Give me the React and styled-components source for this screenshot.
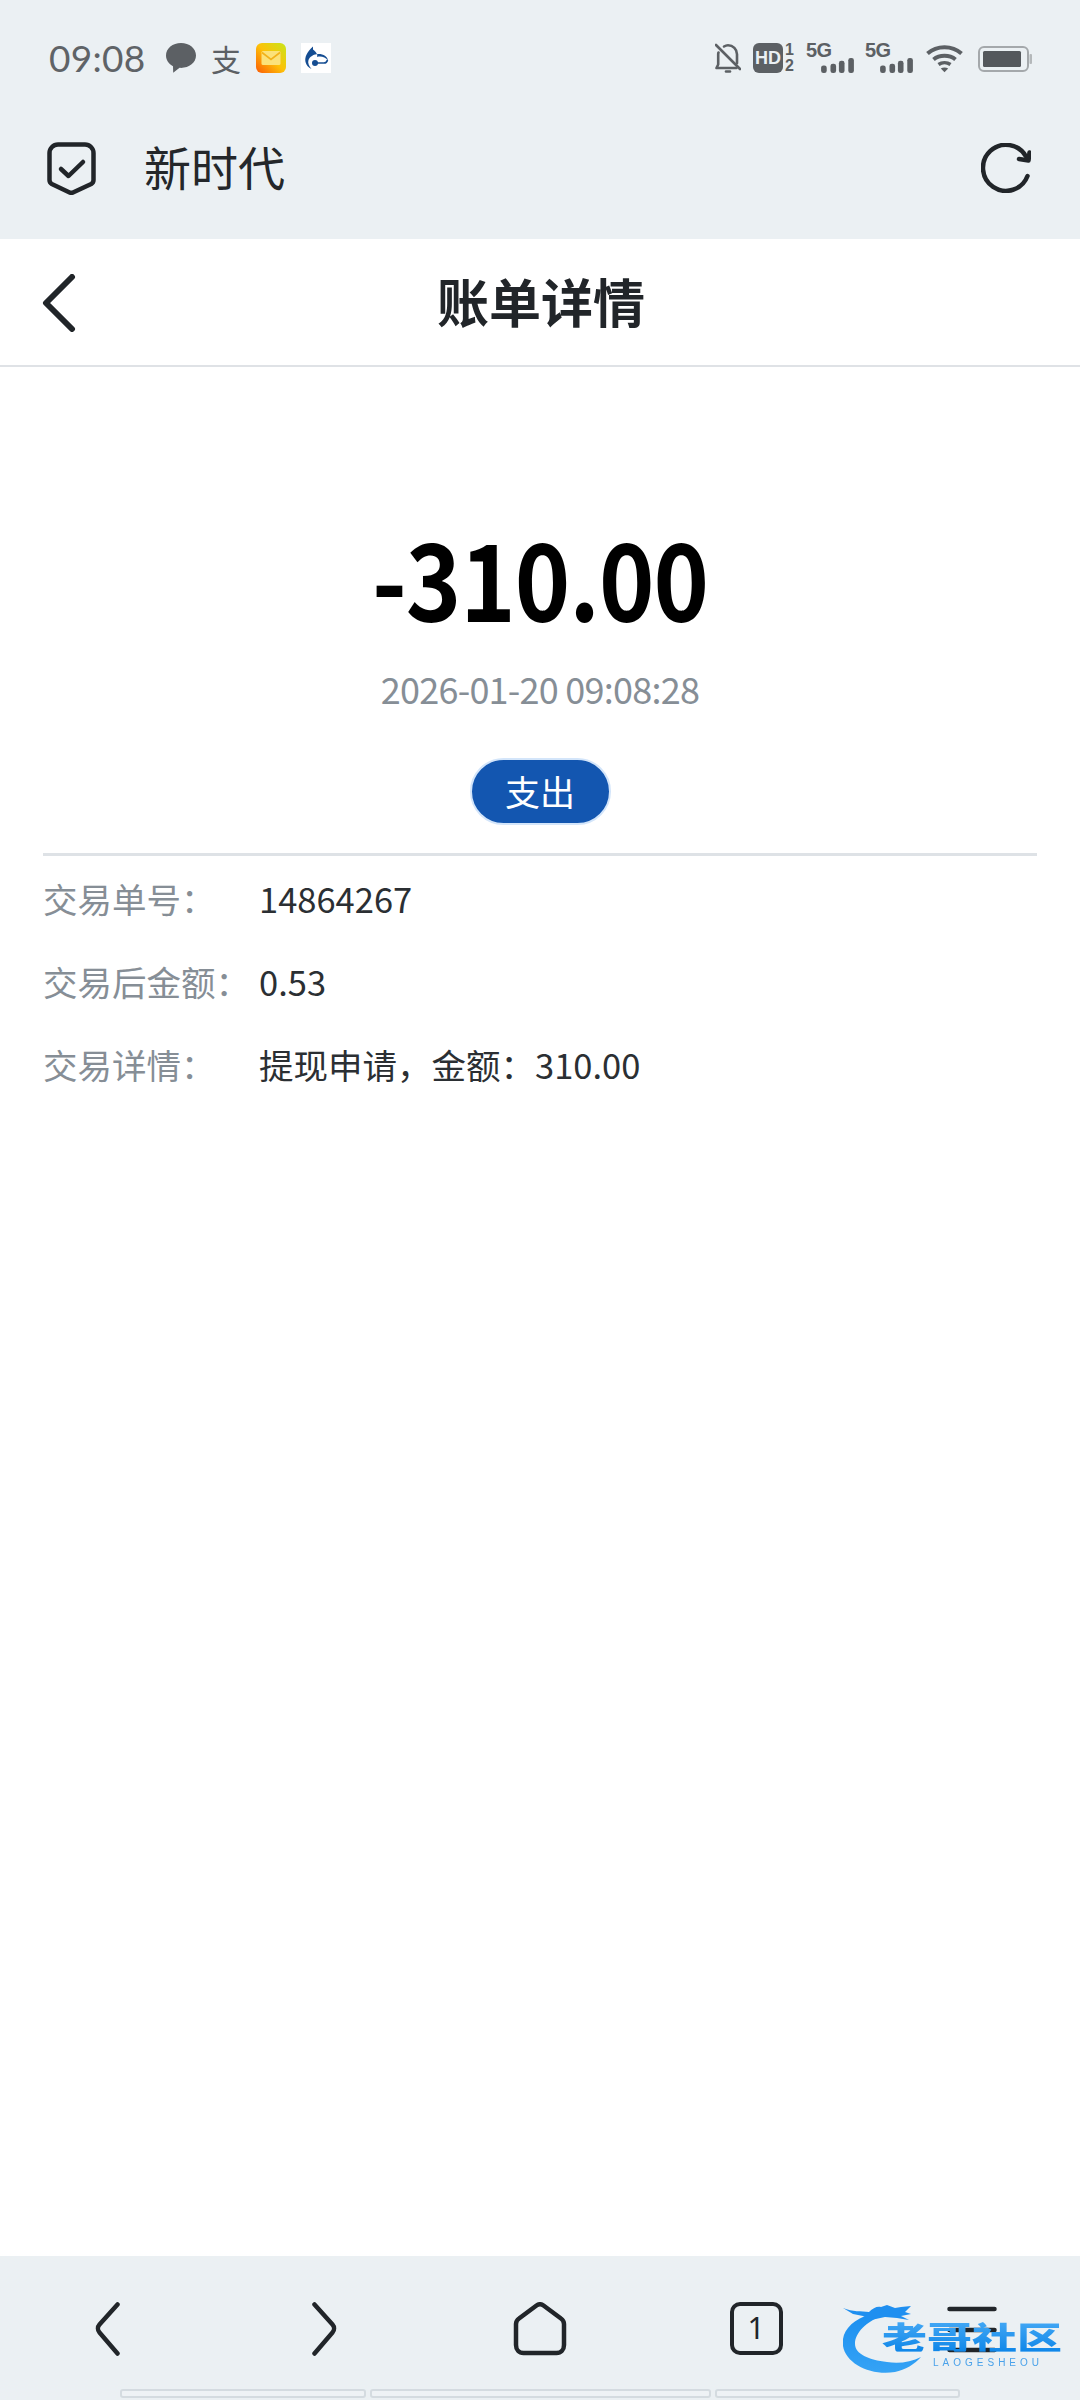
import React from "react";
import styled, { createGlobalStyle } from "styled-components";

const cjk = `"Noto Sans CJK SC", "Noto Sans", sans-serif`;

const Global = createGlobalStyle`
  html, body { margin: 0; padding: 0; background: #fff; }
  * { box-sizing: border-box; }
`;

const Page = styled.div`
  width: 1080px;
  height: 2400px;
  display: flex;
  flex-direction: column;
  background: #fff;
  font-family: ${cjk};
  overflow: hidden;
`;

const Chrome = styled.div`
  background: #ebf0f3;
  height: 239px;
  display: flex;
  flex-direction: column;
`;

const StatusBar = styled.div`
  height: 116px;
  padding: 43px 48px 0 49px;
  display: flex;
  justify-content: space-between;
  align-items: flex-start;
  color: #5c6064;
`;

const StatusGroup = styled.div`
  display: flex;
  align-items: flex-start;
  gap: ${(p) => p.$gap}px;
`;

const Clock = styled.span`
  width: 102px;
  font-family: "Lato", "Noto Sans", sans-serif;
  font-size: 37px;
  line-height: 30px;
  letter-spacing: 0.3px;
  color: #5f6367;
`;

const NoteSlot = styled.span`
  width: 30px;
  height: 30px;
  flex: none;
  display: flex;
  align-items: center;
  justify-content: center;
  font-family: ${cjk};
  font-size: 30px;
  line-height: 30px;
  color: #5c6064;
`;

const HdGroup = styled.div`
  display: flex;
  gap: 2px;
  width: 43px;
`;

const HdBadge = styled.span`
  width: 30px;
  height: 30px;
  border-radius: 6px;
  background: #5c6064;
  color: #ebf0f3;
  font-family: "Liberation Sans", sans-serif;
  font-weight: 700;
  font-size: 18px;
  line-height: 30px;
  text-align: center;
`;

const SimStack = styled.div`
  display: flex;
  flex-direction: column;
  justify-content: space-between;
  height: 30px;
  font-family: "Liberation Sans", sans-serif;
  font-weight: 700;
  font-size: 16px;
  line-height: 14px;
  color: #5c6064;
`;

const Signal = styled.div`
  width: 47px;
  height: 30px;
  display: flex;
  flex-direction: column;
`;

const SignalLabel = styled.span`
  margin-left: -2px;
  font-family: "Liberation Sans", sans-serif;
  font-weight: 700;
  font-size: 20px;
  line-height: 15px;
  letter-spacing: -0.5px;
  color: #5c6064;
`;

const SignalBars = styled.svg`
  align-self: flex-end;
  display: block;
`;

const Toolbar = styled.div`
  height: 123px;
  padding: 0 49px 0 47px;
  display: flex;
  align-items: flex-start;
`;

const ShieldIcon = styled.svg`
  flex: none;
  margin-top: 26px;
`;

const SiteName = styled.div`
  margin: 18px 0 0 48px;
  font-size: 47px;
  line-height: 64px;
  color: #24272a;
  flex: 1;
`;

const RefreshIcon = styled.svg`
  flex: none;
  margin-top: 27px;
`;

const PageHeader = styled.header`
  position: relative;
  height: 128px;
  border-bottom: 2px solid #dfe2e6;
  display: flex;
  align-items: center;
  justify-content: center;
  background: #fff;
`;

const BackLink = styled.svg`
  position: absolute;
  left: 42px;
  top: 35px;
`;

const PageTitle = styled.h1`
  margin: -2px 0 0 2px;
  font-size: 52px;
  line-height: 70px;
  font-weight: 700;
  color: #212529;
`;

const Main = styled.main`
  flex: 1;
  padding: 149px 43px 0;
  display: flex;
  flex-direction: column;
`;

const Amount = styled.div`
  text-align: center;
  font-size: 107px;
  line-height: 120px;
  font-weight: 700;
  color: #000;
  letter-spacing: -1.2px;
  transform: scaleX(0.88);
`;

const DateText = styled.div`
  margin-top: 27px;
  text-align: center;
  font-size: 36px;
  line-height: 50px;
  letter-spacing: -0.75px;
  color: #868e96;
`;

const Pill = styled.span`
  align-self: center;
  margin-top: 45px;
  width: 141px;
  height: 67px;
  border: 2px solid #d3e5fa;
  border-radius: 34px;
  background: #1356b0;
  color: #fff;
  font-size: 35px;
  line-height: 61px;
  text-align: center;
`;

const Divider = styled.hr`
  margin: 28px 0 0;
  border: 0;
  height: 3px;
  background: #dee2e6;
`;

const Row = styled.div`
  display: flex;
  height: 83px;
  align-items: center;
  font-size: 34.5px;
  line-height: 50px;
`;

const RowLabel = styled.span`
  width: 216px;
  flex: none;
  color: #868e96;
`;

const RowValue = styled.span`
  color: #2b2f33;
`;

const BottomNav = styled.nav`
  position: relative;
  height: 144px;
  background: #ebf0f3;
  padding-top: 46px;
  display: flex;
  flex-direction: column;
`;

const NavGrid = styled.div`
  display: grid;
  grid-template-columns: repeat(5, 216px);
  justify-items: center;
  height: 54px;
`;

const NavIcon = styled.svg`
  display: block;
`;

const TabCount = styled.div`
  width: 53px;
  height: 53px;
  border: 4px solid #212529;
  border-radius: 10px;
  color: #212529;
  font-family: "Noto Sans", sans-serif;
  font-size: 30px;
  line-height: 44px;
  text-align: center;
`;

const TabStrip = styled.div`
  margin-top: 33px;
  padding-left: 120px;
  display: flex;
  gap: 4px;
`;

const TabThumb = styled.span`
  width: ${(p) => p.$w}px;
  height: 9px;
  border: 2px solid #d4dbe0;
  border-radius: 3px;
  background: #eef2f5;
`;

const Watermark = styled.div`
  position: absolute;
  left: 843px;
  top: 46px;
  width: 222px;
  height: 72px;
  filter: blur(0.6px);
`;

const WatermarkArt = styled.svg`
  position: absolute;
  left: 0;
  top: 0;
`;

const WatermarkName = styled.span`
  position: absolute;
  left: 39px;
  top: 18px;
  font-size: 45px;
  line-height: 44px;
  font-weight: 900;
  white-space: nowrap;
  background: linear-gradient(180deg, #45a9f5, #0f86e8);
  -webkit-background-clip: text;
  background-clip: text;
  color: transparent;
  transform: scaleY(0.72);
  transform-origin: top left;
`;

const WatermarkLatin = styled.span`
  position: absolute;
  left: 90px;
  top: 55px;
  font-family: "Liberation Sans", sans-serif;
  font-size: 10px;
  line-height: 12px;
  letter-spacing: 4px;
  white-space: nowrap;
  color: #4aa2ea;
`;

const SignalIcon = () => (
  <Signal>
    <SignalLabel>5G</SignalLabel>
    <SignalBars width="35" height="16" viewBox="0 0 35 16" fill="#5c6064">
      <rect x="0" y="8" width="6" height="8" rx="2.5" />
      <rect x="10" y="6" width="6" height="10" rx="2.5" />
      <rect x="19" y="3" width="6" height="13" rx="2.5" />
      <rect x="29" y="0" width="6" height="16" rx="2.5" />
    </SignalBars>
  </Signal>
);

export default function App() {
  const rows = [
    ["交易单号：", "14864267"],
    ["交易后金额：", "0.53"],
    ["交易详情：", "提现申请，金额：310.00"],
  ];
  return (
    <Page>
      <Global />
      <Chrome>
        <StatusBar>
          <StatusGroup $gap={15}>
            <Clock>09:08</Clock>
            <svg width="30" height="30" viewBox="0 0 30 30" fill="#5c6064">
              <path d="M15 0C6.700 0 0 5.400 0 12.600c0 4.600 2.800 8.400 7 10.600l.2 6.600 6.400-5c.5 0 .9.100 1.400.100 8.300 0 15-5.200 15-12.300C30 5.400 23.300 0 15 0z" />
            </svg>
            <NoteSlot>支</NoteSlot>
            <svg width="30" height="30" viewBox="0 0 30 30">
              <defs>
                <linearGradient id="mailBg" x1="1" y1="0" x2="0" y2="1">
                  <stop offset="0" stopColor="#c8e61a" />
                  <stop offset="0.5" stopColor="#fdc108" />
                  <stop offset="1" stopColor="#fb5a05" />
                </linearGradient>
              </defs>
              <rect width="30" height="30" rx="6" fill="url(#mailBg)" />
              <rect x="5.500" y="8" width="19" height="14" rx="1.500" fill="#fbe27a" />
              <path d="M6 9.500l9 7 9-7" fill="none" stroke="#f2b21a" strokeWidth="1.600" />
            </svg>
            <svg width="30" height="30" viewBox="0 0 30 30">
              <rect width="30" height="30" fill="#fff" />
              <path d="M12 3.500C6 9 3.500 14 4.500 19c.8 3.500 3 5.500 6 7-2.500-3-4-6-3-9 1-3 5-6 10-6 5 0 9 2.500 9.500 6.500-2-2.500-5-4-8-4-1 0-2 .1-3 .4 1-1.400-.5-5-4-7.400z" fill="#154d92" />
              <circle cx="14" cy="20" r="3" fill="#154d92" />
              <path d="M14 20h9c1.500 0 3-1 3.500-3" fill="none" stroke="#154d92" strokeWidth="1.600" />
            </svg>
          </StatusGroup>
          <StatusGroup $gap={12}>
            <svg width="26" height="30" viewBox="0 0 26 30" fill="none" stroke="#5c6064" strokeWidth="2.600" strokeLinecap="round" strokeLinejoin="round">
              <path d="M1 2l24 24" />
              <path d="M9 3.500c1.200-.8 2.600-1.300 4-1.300 5 0 9 4 9 9v9" />
              <path d="M3.500 9.500c-.2.600-.3 1.200-.3 1.700v10.300L1.500 25h20" />
              <path d="M11 28.500h4" />
            </svg>
            <HdGroup>
              <HdBadge>HD</HdBadge>
              <SimStack>
                <span>1</span>
                <span>2</span>
              </SimStack>
            </HdGroup>
            <SignalIcon />
            <SignalIcon />
            <svg width="37" height="30" viewBox="0 0 37 30" fill="none" stroke="#5c6064" strokeWidth="4">
              <path d="M1.500 10.500C11 2 26 2 35.500 10.500" />
              <path d="M7.500 16.500c6-5 16-5 22 0" />
              <path d="M12.500 21.500c3.500-2.500 8.500-2.500 12 0" strokeWidth="3.500" />
              <path d="M14.800 25.500l3.700 3.700 3.700-3.700c-2-1.500-5.400-1.500-7.400 0z" fill="#5c6064" stroke="none" />
            </svg>
            <svg width="54" height="30" viewBox="0 0 54 30" style={{ marginLeft: 3 }}>
              <rect x="1" y="4" width="49" height="24" rx="5" fill="none" stroke="#a4a8ab" strokeWidth="2" />
              <rect x="5" y="8" width="38" height="16" rx="1.500" fill="#54585c" />
              <rect x="51.500" y="11" width="2.500" height="10" rx="1" fill="#b4b8ba" />
            </svg>
          </StatusGroup>
        </StatusBar>
        <Toolbar>
          <ShieldIcon width="49" height="53" viewBox="0 0 49 53" fill="none" stroke="#212529" strokeWidth="4.500" strokeLinecap="round" strokeLinejoin="round">
            <path d="M11 2.500h27a8.500 8.500 0 0 1 8.500 8.500v27c0 1.700-.9 3.200-2.300 4l-17.700 8.300a5 5 0 0 1-4.400 0L4.800 42a4.500 4.500 0 0 1-2.300-4V11A8.500 8.500 0 0 1 11 2.500z" />
            <path d="M14 27l7.500 7L36 20" />
          </ShieldIcon>
          <SiteName>新时代</SiteName>
          <RefreshIcon width="50" height="50" viewBox="0 0 50 50" fill="none" stroke="#212529" strokeWidth="4.500" strokeLinecap="round" strokeLinejoin="round">
            <path d="M46.500 33A23 23 0 1 1 45 13.500" />
            <path d="M48.500 9.500L47.500 17.500L38 16" />
          </RefreshIcon>
        </Toolbar>
      </Chrome>

      <PageHeader>
        <BackLink width="34" height="58" viewBox="0 0 34 58" fill="none" stroke="#212529" strokeWidth="6" strokeLinecap="round" strokeLinejoin="round">
          <path d="M30 3L4 29l26 26" />
        </BackLink>
        <PageTitle>账单详情</PageTitle>
      </PageHeader>

      <Main>
        <Amount>-310.00</Amount>
        <DateText>2026-01-20 09:08:28</DateText>
        <Pill>支出</Pill>
        <Divider />
        {rows.map(([label, value]) => (
          <Row key={label}>
            <RowLabel>{label}</RowLabel>
            <RowValue>{value}</RowValue>
          </Row>
        ))}
      </Main>

      <BottomNav>
        <NavGrid>
          <NavIcon width="26" height="54" viewBox="0 0 26 54" fill="none" stroke="#212529" strokeWidth="4.500" strokeLinecap="round" strokeLinejoin="round">
            <path d="M22.500 2.500L4.500 22.500a6 6 0 0 0 0 8L22.500 51.500" />
          </NavIcon>
          <NavIcon width="26" height="54" viewBox="0 0 26 54" fill="none" stroke="#212529" strokeWidth="4.500" strokeLinecap="round" strokeLinejoin="round">
            <path d="M3.500 2.500L21.500 22.500a6 6 0 0 1 0 8L3.500 51.500" />
          </NavIcon>
          <NavIcon width="54" height="54" viewBox="0 0 54 54" fill="none" stroke="#212529" strokeWidth="4.500" strokeLinejoin="round">
            <path d="M23.500 3.500L6 16.500a7 7 0 0 0-3 5.500v21c0 4.500 3 8 7.500 8h33c4.500 0 7.500-3.500 7.500-8V22a7 7 0 0 0-3-5.500L30.500 3.500a6 6 0 0 0-7 0z" />
          </NavIcon>
          <TabCount>1</TabCount>
          <NavIcon width="50" height="54" viewBox="0 0 50 54" stroke="#212529" strokeWidth="4.500" strokeLinecap="round">
            <path d="M2.500 7h45" />
            <path d="M2.500 28h45" />
            <path d="M2.500 48h45" />
          </NavIcon>
        </NavGrid>
        <TabStrip>
          <TabThumb $w={246} />
          <TabThumb $w={341} />
          <TabThumb $w={245} />
        </TabStrip>
        <Watermark>
          <WatermarkArt width="222" height="72" viewBox="0 0 222 72" fill="none">
            <defs>
              <linearGradient id="dragon" x1="0" y1="0" x2="0" y2="1">
                <stop offset="0" stopColor="#1b8ff0" />
                <stop offset="1" stopColor="#35a3f5" />
              </linearGradient>
            </defs>
            <path d="M28 12C8 18-2 30 0 44 3 62 28 74 52 70c10-2 20-8 26-15-10 5-22 7-34 5C26 58 12 52 12 42c0-12 12-22 26-28z" fill="url(#dragon)" />
            <path d="M0 6c10 4 18 3 26 4 4-4 8-6 12-5l6-2 8 3 6-1 10-1-6 6 6 2-10 2 8 4-12-2-12-1-14 3-8-4-10-2z" fill="#1f8ff0" />
          </WatermarkArt>
          <WatermarkName>老哥社区</WatermarkName>
          <WatermarkLatin>LAOGESHEOU</WatermarkLatin>
        </Watermark>
      </BottomNav>
    </Page>
  );
}
